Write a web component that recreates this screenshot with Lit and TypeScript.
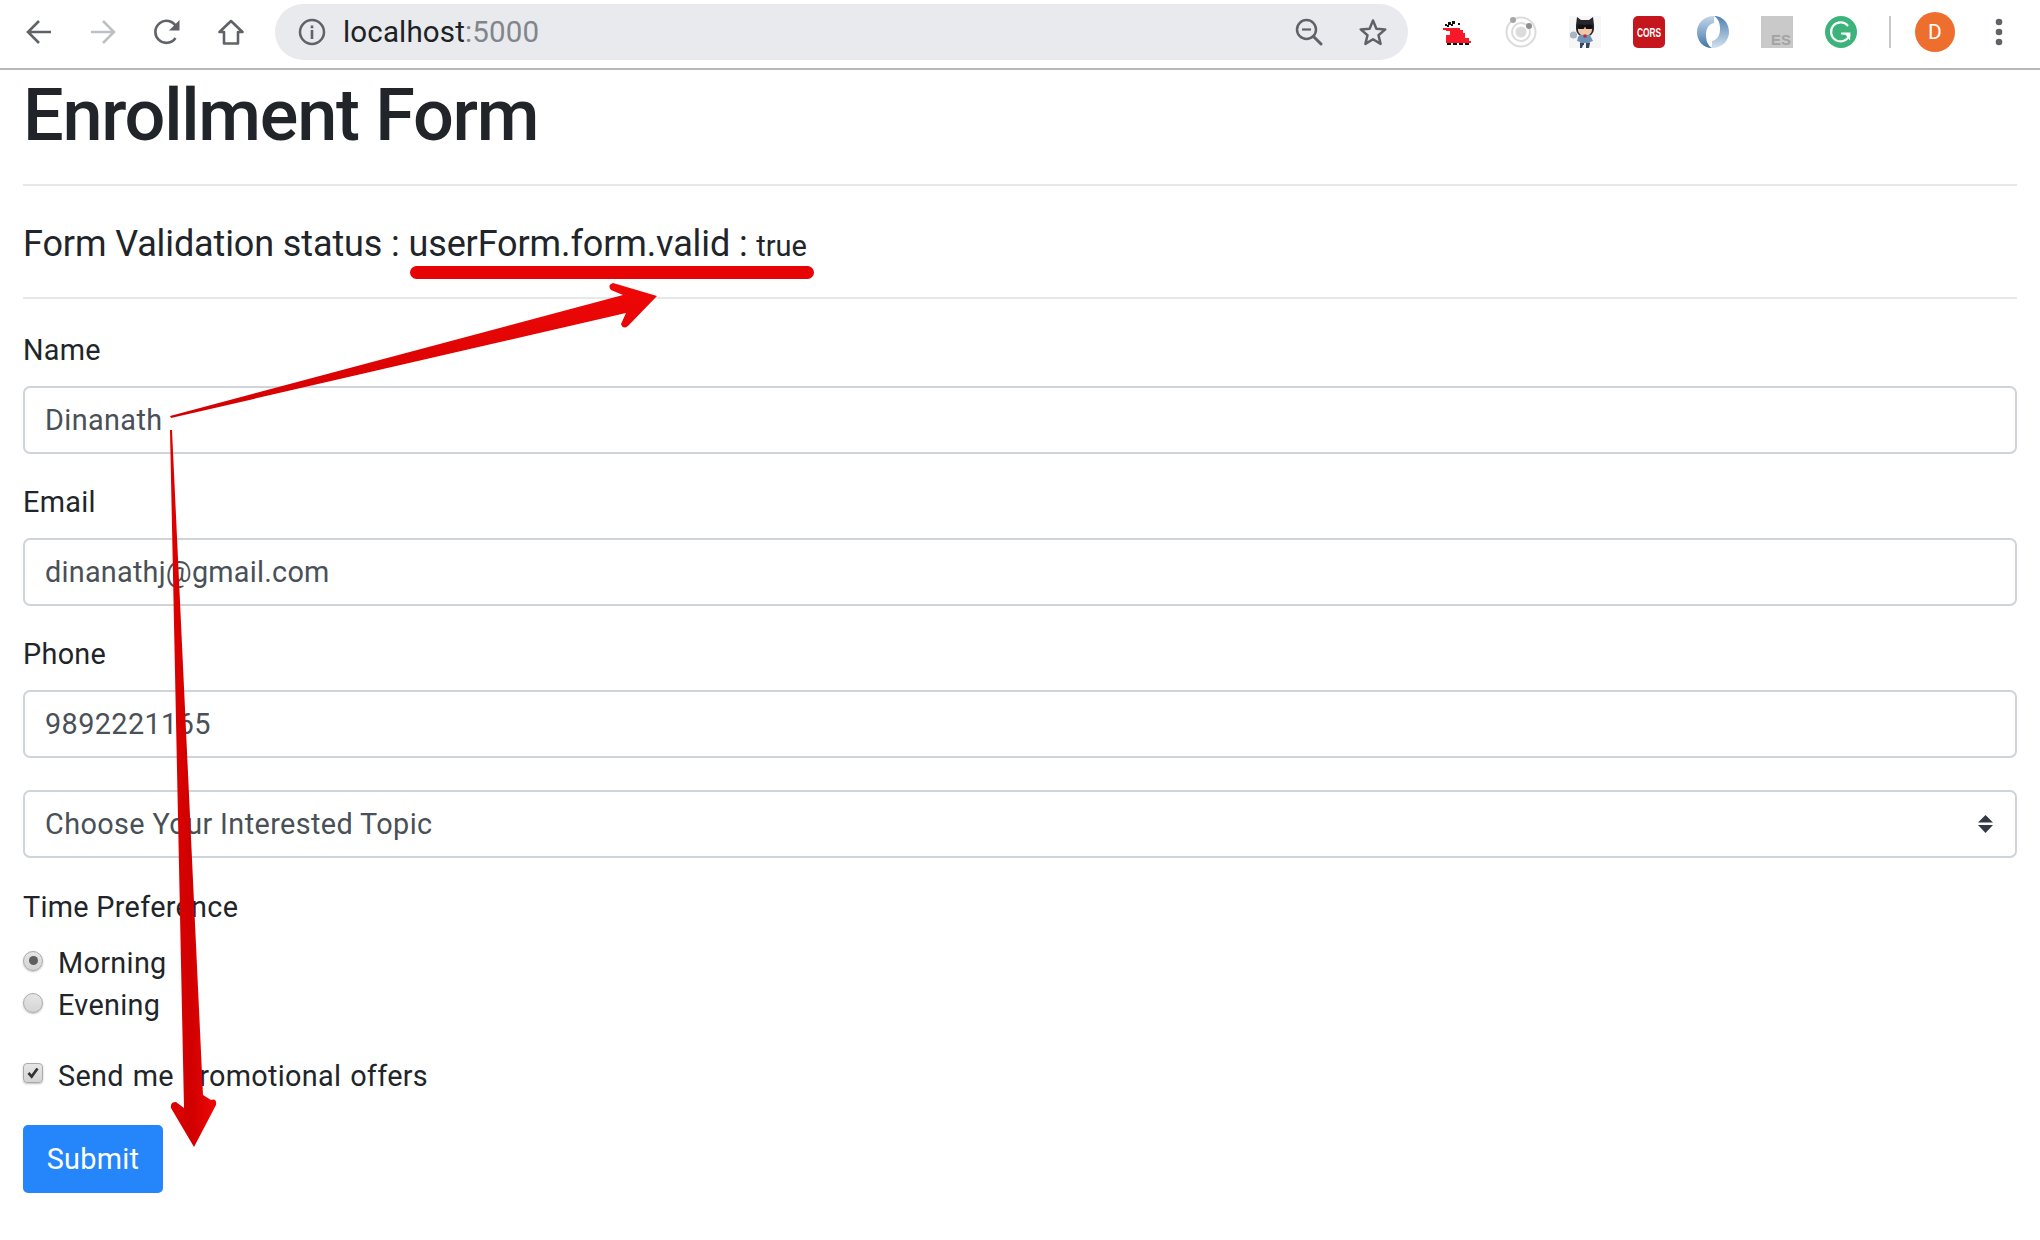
import { LitElement, html, css, svg } from "lit";
import { customElement } from "lit/decorators.js";

const ext = (content: unknown) => html`<svg class="ext" width="32" height="32" viewBox="0 0 32 32">${content}</svg>`;

@customElement("app-root")
export class AppRoot extends LitElement {
  static styles = css`
    :host { display: block; position: relative; width: 2040px; height: 1240px; overflow: hidden; background: #fff; color: #212529; font-family: Roboto, "Liberation Sans", Arial, sans-serif; }
    .toolbar { height: 68px; border-bottom: 2px solid #b8b8b8; display: flex; align-items: center; padding-left: 26px; box-sizing: content-box; }
    .nav { display: block; flex: none; margin-top: -5px; }
    .n1 { margin-right: 38px; }
    .n2 { margin-right: 38px; }
    .n3 { margin-right: 36px; }
    .n4 { margin-right: 30px; }
    .omni { flex: none; width: 1133px; height: 56px; margin-top: -4px; border-radius: 28px; background: #e8eaed; display: flex; align-items: center; padding-left: 23px; box-sizing: border-box; font-size: 29.5px; letter-spacing: .15px; color: #202124; }
    .omni .info { margin-right: 17px; }
    .omni .port { color: #80868b; }
    .omni .spacer { flex: 1; }
    .omni .zoom { margin-right: 35px; }
    .omni .star { margin-right: 20px; }
    .exts { display: flex; align-items: center; margin-left: 33px; margin-top: -4px; flex: none; }
    .ext { display: block; flex: none; margin-right: 32px; }
    .sep { width: 2px; height: 32px; background: #c8c8c8; margin-right: 24px; }
    .avatar { width: 40px; height: 40px; border-radius: 50%; background: #ee6f2d; color: #fff; font-size: 21px; display: flex; align-items: center; justify-content: center; margin-right: 40px; }
    .more { display: block; flex: none; }

    .page { padding: 4px 23px 0; }
    h1 { margin: 0 0 26px; font-size: 72px; font-weight: 500; line-height: 84px; letter-spacing: -1.25px; }
    hr { border: 0; height: 2px; background: #e6e7e8; margin: 0; }
    h3 { margin: 37px 0 29px; font-size: 36px; line-height: 43px; font-weight: 400; letter-spacing: -.12px; }
    h3 small { font-size: 29px; letter-spacing: 0; }
    .group { margin-bottom: 27px; }
    label, .lbl { display: block; font-size: 28.8px; line-height: 43px; margin-bottom: 14px; letter-spacing: .3px; }
    .control { height: 68px; box-sizing: border-box; border: 2px solid #ced4da; border-radius: 7px; padding: 0 20px; display: flex; align-items: center; font-size: 28.8px; letter-spacing: .4px; color: #495057; background: #fff; }
    .control.em { letter-spacing: .25px; }
    .control.sel { justify-content: space-between; padding-right: 22px; }
    .g1 { margin-top: 30px; }
    .topic { margin-bottom: 28px; margin-top: 32px; }
    .opt { display: flex; align-items: center; font-size: 28.8px; line-height: 42px; letter-spacing: .33px; }
    .lbl.time { margin-bottom: 13px; }
    .opt .txt { margin-left: 15px; }
    .radio { width: 20px; height: 20px; border-radius: 50%; box-sizing: border-box; border: 1px solid #aaa; background: linear-gradient(#e6e6e6, #d4d4d4); box-shadow: 0 1px 2px rgba(0,0,0,.25); display: flex; align-items: center; justify-content: center; margin-top: -5px; flex: none; }
    .radio.on::after { content: ""; width: 9px; height: 9px; border-radius: 50%; background: #5f5f5f; }
    .check { width: 20px; height: 20px; border-radius: 4px; box-sizing: border-box; border: 1px solid #aaa; background: linear-gradient(#e6e6e6, #d4d4d4); box-shadow: 0 1px 2px rgba(0,0,0,.25); margin-top: -7px; flex: none; display: block; }
    .promo { margin-top: 29px; letter-spacing: .3px; word-spacing: 1.5px; }
    .submit { margin-top: 28px; width: 140px; height: 68px; border-radius: 5px; background: #2585fb; color: #fff; font-size: 28.8px; letter-spacing: .3px; display: flex; align-items: center; justify-content: center; }
    .overlay { position: absolute; left: 0; top: 0; pointer-events: none; }
  `;

  render() {
    return html`
      <div class="toolbar">
        <svg class="nav n1" width="26" height="26" viewBox="0 0 26 26"><path d="M25 13H3M13 2 2 13l11 11" fill="none" stroke="#5f6368" stroke-width="2.6"/></svg>
        <svg class="nav n2" width="26" height="26" viewBox="0 0 26 26"><path d="M1 13h22M13 2l11 11-11 11" fill="none" stroke="#bdc1c6" stroke-width="2.6"/></svg>
        <svg class="nav n3" width="27" height="26" viewBox="0 0 27 26"><path d="M21.5 19a11 11 0 1 1 .5-11.5" fill="none" stroke="#5f6368" stroke-width="2.6"/><path d="M25.5 1v10.5H15z" fill="#5f6368"/></svg>
        <svg class="nav n4" width="28" height="26" viewBox="0 0 28 26"><path d="M14 2 2.500 13H7v11.500h14V13h4.500z" fill="none" stroke="#5f6368" stroke-width="2.600" stroke-linejoin="round"/></svg>
        <div class="omni">
          <svg class="info" width="28" height="28" viewBox="0 0 28 28"><circle cx="14" cy="14" r="12" fill="none" stroke="#5f6368" stroke-width="2.500"/><rect x="12.700" y="12" width="2.600" height="9" fill="#5f6368"/><rect x="12.700" y="7.500" width="2.600" height="2.800" fill="#5f6368"/></svg>
          <span>localhost<span class="port">:5000</span></span>
          <span class="spacer"></span>
          <svg class="zoom" width="28" height="28" viewBox="0 0 28 28"><circle cx="11.500" cy="11.500" r="9.500" fill="none" stroke="#5f6368" stroke-width="2.500"/><path d="M18.500 18.500 26 26" stroke="#5f6368" stroke-width="3" stroke-linecap="round"/><path d="M7 11.500h9" stroke="#5f6368" stroke-width="2.200"/></svg>
          <svg class="star" width="30" height="30" viewBox="0 0 30 30"><path d="M15 3.500l3.400 8.200 8.900.7-6.800 5.800 2.100 8.700L15 22.200l-7.600 4.700 2.100-8.700-6.800-5.800 8.900-.7z" fill="none" stroke="#5f6368" stroke-width="2.500" stroke-linejoin="round"/></svg>
        </div>
        <div class="exts">
          ${ext(svg`
            <path d="M2 12h17v2h3v3h2v5h4v3h2v2H5V14H2z" fill="#f7182a"/>
            <rect x="5" y="15" width="4" height="4" fill="#fff"/>
            <g fill="#111"><rect x="6" y="27" width="4" height="2"/><rect x="12" y="27" width="4" height="2"/><rect x="18" y="27" width="4" height="2"/><rect x="24" y="27" width="4" height="2"/><rect x="4" y="8" width="2" height="2"/><rect x="7" y="6" width="3" height="3"/><rect x="6" y="9" width="2" height="2"/><rect x="11" y="5" width="3" height="3"/><rect x="10" y="8" width="2" height="2"/><rect x="17" y="7" width="2" height="2"/></g>`)}
          ${ext(svg`
            <circle cx="16" cy="16" r="14.500" fill="none" stroke="#dcdcdc" stroke-width="2"/><circle cx="16" cy="16" r="9" fill="none" stroke="#dcdcdc" stroke-width="2"/><circle cx="16" cy="16" r="5.500" fill="#dcdcdc"/><circle cx="8" cy="4" r="3" fill="#a6a6a6"/><circle cx="24" cy="10" r="3" fill="#8f8f8f"/>`)}
          ${ext(svg`
            <rect width="32" height="32" fill="#f6f6f6"/>
            <path d="M8 1l4 3h8l4-3 1 8v4a9 8 0 0 1-18 0V9z" fill="#25252b"/>
            <path d="M9 11h14v3a7 6 0 0 1-14 0z" fill="#f0c8a8"/>
            <rect x="8.500" y="8.500" width="7" height="4.500" rx="1.500" fill="#101015"/>
            <rect x="16.500" y="8.500" width="7" height="4.500" rx="1.500" fill="#101015"/>
            <rect x="14" y="9" width="4" height="1.500" fill="#101015"/>
            <path d="M11 19h10l3 6-3 1v1h-10v-1l-3-1 1-4z" fill="#6f93b8"/>
            <rect x="14.500" y="18.500" width="3" height="3" fill="#c0272d"/>
            <circle cx="4.500" cy="19" r="3.600" fill="#a9b5c4"/>
            <path d="M11 27h4v2h-1l-1 3h-2zM17 27h4l-1 5h-3z" fill="#39435a"/>`)}
          ${ext(svg`
            <rect width="32" height="32" rx="5" fill="#c5161d"/>
            <text transform="translate(16 21) scale(1.05 1.55)" text-anchor="middle" font-family="Liberation Sans, sans-serif" font-weight="700" font-size="8" fill="#fff">CORS</text>`)}
          ${ext(svg`
            <defs>
              <linearGradient id="jl" x1="0" y1="0" x2="0" y2="1"><stop offset="0" stop-color="#c3d6e8"/><stop offset=".55" stop-color="#7ea4c9"/><stop offset="1" stop-color="#3f73a6"/></linearGradient>
              <linearGradient id="jr" x1="0" y1="0" x2="0" y2="1"><stop offset="0" stop-color="#4f80b0"/><stop offset=".5" stop-color="#8fb0d0"/><stop offset="1" stop-color="#d4e1ee"/></linearGradient>
            </defs>
            <path d="M17 0C7 0 0 7 0 16s6 16 15 16c-4-2-6-7-6-13C9 12 12 8 17 7z" fill="url(#jl)"/>
            <path d="M15 32c10 0 17-7 17-16S26 0 17 0c4 2 6 7 6 13 0 7-3 11-8 12z" fill="url(#jr)"/>`)}
          ${ext(svg`
            <rect width="32" height="32" fill="#c9c9c9"/>
            <text x="10" y="29" font-family="Liberation Sans, sans-serif" font-weight="700" font-size="15" fill="#a3a3a3">ES</text>`)}
          ${ext(svg`
            <circle cx="16" cy="16" r="16" fill="#3db37c"/>
            <path d="M23 10a9.500 9.500 0 1 0 1.500 9" fill="none" stroke="#fff" stroke-width="2.200"/>
            <path d="M16 16.500h9.500l-.5 8-3.500-4.500-1-1.200-4.500-.3z" fill="#fff"/>`)}
          <div class="sep"></div>
          <div class="avatar">D</div>
          <svg class="more" width="8" height="28" viewBox="0 0 8 28"><circle cx="4" cy="4" r="3.300" fill="#5f6368"/><circle cx="4" cy="14" r="3.300" fill="#5f6368"/><circle cx="4" cy="24" r="3.300" fill="#5f6368"/></svg>
        </div>
      </div>

      <div class="page">
        <h1>Enrollment Form</h1>
        <hr />
        <h3>Form Validation status : userForm.form.valid : <small>true</small></h3>
        <hr />
        <div class="g1">
          <div class="group"><label>Name</label><div class="control">Dinanath</div></div>
          <div class="group"><label>Email</label><div class="control em">dinanathj@gmail.com</div></div>
          <div><label>Phone</label><div class="control">9892221165</div></div>
        </div>
        <div class="topic">
          <div class="control sel">
            <span>Choose Your Interested Topic</span>
            <svg width="15" height="18" viewBox="0 0 15 18"><path d="M7.500 0 15 7.500H0zM7.500 18 0 10h15z" fill="#343a40"/></svg>
          </div>
        </div>
        <div class="lbl time">Time Preference</div>
        <div class="opt"><span class="radio on"></span><span class="txt">Morning</span></div>
        <div class="opt"><span class="radio"></span><span class="txt">Evening</span></div>
        <div class="opt promo">
          <svg class="check" viewBox="0 0 20 20"><path d="M5 10l3.500 4L15 5" fill="none" stroke="#333" stroke-width="3"/></svg>
          <span class="txt">Send me promotional offers</span>
        </div>
        <div class="submit">Submit</div>
      </div>

      <svg class="overlay" width="2040" height="1240" viewBox="0 0 2040 1240">
        <defs>
          <linearGradient id="a1" x1="0" y1="0" x2="0" y2="1"><stop offset="0" stop-color="#f00808"/><stop offset="1" stop-color="#d20000"/></linearGradient>
          <linearGradient id="a2" x1="0" y1="0" x2="1" y2="0"><stop offset="0" stop-color="#e00000"/><stop offset=".45" stop-color="#d00000"/><stop offset="1" stop-color="#f00606"/></linearGradient>
        </defs>
        <rect x="410" y="266" width="404" height="13" rx="6.500" fill="#e60303"/>
        <path d="M170 416 L623 295 L611 290 Q607 285 613 283 L657 296 L628 326 Q623 330 621 324 L626 313 L171 418 Z" fill="url(#a1)"/>
        <path d="M170 430 L172 430 L203 1095 L211 1100 Q217 1098 216 1105 L194 1147 L171 1108 Q170 1102 176 1102 L184 1108 Z" fill="url(#a2)"/>
      </svg>
    `;
  }
}
